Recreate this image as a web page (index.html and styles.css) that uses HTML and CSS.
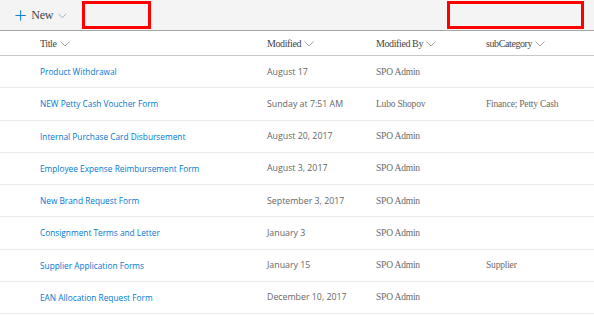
FILE: index.html
```html
<!DOCTYPE html>
<html>
<head>
<meta charset="utf-8">
<link rel="stylesheet" href="styles.css">
</head>
<body>
<div class="cmdbar">
  <div class="newbtn">
    <svg class="plus" width="13" height="13" viewBox="0 0 13 13"><path d="M6.5 0.5v12M0.5 6.5h12" stroke="#0078d4" stroke-width="1.1" fill="none"/></svg>
    <span class="newtext">New</span>
    <svg class="chev blue" width="10" height="6" viewBox="0 0 10 6"><path d="M0.5 0.5l4.5 4.5 4.5-4.5" stroke="#8aa8c4" stroke-width="1" fill="none"/></svg>
  </div>
  <div class="redbox box1"></div>
  <div class="spacer"></div>
  <div class="redbox box2"></div>
</div>
<div class="list">
  <div class="row head">
    <div class="hcell">Title <svg class="chev" width="10" height="6" viewBox="0 0 10 6"><path d="M0.5 0.5l4.5 4.5 4.5-4.5" stroke="#a6a6a6" stroke-width="1" fill="none"/></svg></div>
    <div class="hcell">Modified <svg class="chev" width="10" height="6" viewBox="0 0 10 6"><path d="M0.5 0.5l4.5 4.5 4.5-4.5" stroke="#a6a6a6" stroke-width="1" fill="none"/></svg></div>
    <div class="hcell">Modified By <svg class="chev" width="10" height="6" viewBox="0 0 10 6"><path d="M0.5 0.5l4.5 4.5 4.5-4.5" stroke="#a6a6a6" stroke-width="1" fill="none"/></svg></div>
    <div class="hcell">subCategory <svg class="chev" width="10" height="6" viewBox="0 0 10 6"><path d="M0.5 0.5l4.5 4.5 4.5-4.5" stroke="#a6a6a6" stroke-width="1" fill="none"/></svg></div>
  </div>
  <div class="row item"><a class="title">Product Withdrawal</a><span class="date">August 17</span><span class="serif">SPO Admin</span><span class="serif"></span></div>
  <div class="row item"><a class="title">NEW Petty Cash Voucher Form</a><span class="date">Sunday at 7:51 AM</span><span class="serif">Lubo Shopov</span><span class="serif">Finance; Petty Cash</span></div>
  <div class="row item"><a class="title">Internal Purchase Card Disbursement</a><span class="date">August 20, 2017</span><span class="serif">SPO Admin</span><span class="serif"></span></div>
  <div class="row item"><a class="title">Employee Expense Reimbursement Form</a><span class="date">August 3, 2017</span><span class="serif">SPO Admin</span><span class="serif"></span></div>
  <div class="row item"><a class="title">New Brand Request Form</a><span class="date">September 3, 2017</span><span class="serif">SPO Admin</span><span class="serif"></span></div>
  <div class="row item"><a class="title">Consignment Terms and Letter</a><span class="date">January 3</span><span class="serif">SPO Admin</span><span class="serif"></span></div>
  <div class="row item"><a class="title">Supplier Application Forms</a><span class="date">January 15</span><span class="serif">SPO Admin</span><span class="serif">Supplier</span></div>
  <div class="row item"><a class="title">EAN Allocation Request Form</a><span class="date">December 10, 2017</span><span class="serif">SPO Admin</span><span class="serif"></span></div>
</div>
</body>
</html>
```
FILE: styles.css
```css
html, body {
  margin: 0;
  padding: 0;
  background: #ffffff;
  width: 594px;
  height: 315px;
  overflow: hidden;
}
.cmdbar {
  height: 30px;
  background: #f4f4f4;
  border-bottom: 1px solid #a6a6a6;
  display: flex;
  align-items: flex-start;
  box-sizing: content-box;
}
.newbtn {
  display: flex;
  align-items: center;
  height: 30px;
  padding-left: 15px;
  width: 67px;
  box-sizing: border-box;
}
.newtext {
  font-family: "Liberation Serif", serif;
  font-size: 12px;
  color: #444444;
  margin-left: 5px;
  letter-spacing: -0.2px;
}
.chev { display: inline-block; }
.chev.blue { margin-left: 5px; margin-top: 1px; }
.redbox {
  border: 3px solid #ff0000;
  box-sizing: border-box;
  height: 28px;
  margin-top: 1px;
}
.box1 { width: 69px; margin-left: 15px; }
.spacer { flex: 1; }
.box2 { width: 137px; margin-right: 10px; }
.row {
  display: grid;
  grid-template-columns: 227px 109px 110px 1fr;
  padding-left: 40px;
  align-items: center;
  box-sizing: border-box;
}
.head {
  height: 25px;
  border-bottom: 1px solid #c8c8c8;
}
.hcell {
  font-family: "Liberation Serif", serif;
  font-size: 10px;
  letter-spacing: -0.4px;
  color: #444444;
  display: flex;
  align-items: center;
  gap: 3px;
}
.hcell .chev { margin-top: 1px; }
.item {
  height: 32.25px;
  border-bottom: 1px solid #eaeaea;
}
.title {
  font-family: "Open Sans", sans-serif;
  font-size: 8.3px;
  color: #0078d4;
}
.date {
  font-family: "Open Sans", sans-serif;
  font-size: 8.8px;
  color: #666666;
}
.serif {
  font-family: "Liberation Serif", serif;
  font-size: 9.5px;
  letter-spacing: -0.2px;
  color: #6a6a6a;
}
```
